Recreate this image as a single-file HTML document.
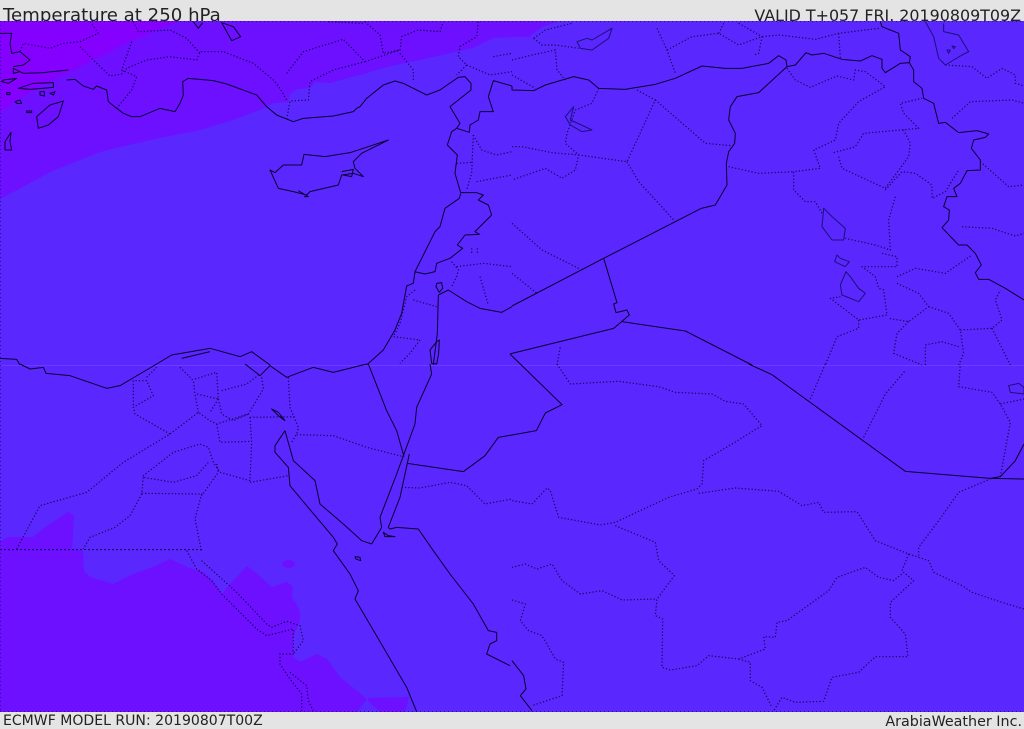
<!DOCTYPE html>
<html><head><meta charset="utf-8"><title>Temperature at 250 hPa</title>
<style>html,body{margin:0;padding:0;background:#e4e4e4;width:1024px;height:729px;overflow:hidden}svg{display:block}text{font-family:"DejaVu Sans","Liberation Sans",sans-serif;fill:#222}
.b{fill:none;stroke:#0a0030;stroke-width:3;stroke-linejoin:round}
.d{fill:none;stroke:#12064a;stroke-width:3.6;stroke-dasharray:3.6 6.4;stroke-linejoin:round}
.l{fill:none;stroke:#1c1078;stroke-width:3;stroke-linejoin:round}</style></head><body>
<svg width="1024" height="729" viewBox="0 0 1024 729" xmlns="http://www.w3.org/2000/svg">
<rect width="1024" height="729" fill="#e4e4e4"/>
<text x="3" y="21" font-size="18.15">Temperature at 250 hPa</text>
<text x="1021" y="21" font-size="15.9" text-anchor="end">VALID T+057 FRI. 20190809T09Z</text>
<text x="3" y="725" font-size="14.05">ECMWF MODEL RUN: 20190807T00Z</text>
<text x="1022" y="726" font-size="14.3" text-anchor="end">ArabiaWeather Inc.</text>
<rect y="21" width="1024" height="691" fill="#5a27ff"/>
<path fill="#6c10ff" d="M0 21V199L17 190 50 172 100 152 150 140 200 130 233 120 267 107 273 103 288 102 291 93 297 89 310 88 315 82 330 83 367 73 383 68 433 57 473 48 493 38 512 37 529 37 542 27 559 21Z"/>
<path fill="#8400ff" d="M0 21V112L33 90 93 60 133 40 180 21Z"/>
<path fill="#6c10ff" d="M0 712V542L8 537 33 537 47 526 68 512 74 516 72 549 83 551 84 571 90 577 113 584 133 574 153 567 170 559 187 567 203 572 213 581 222 594 230 584 247 566 257 574 272 587 287 582 293 587 292 597 300 611 300 621 293 637 293 657 300 662 317 654 327 659 340 677 367 699 357 712Z"/>
<path fill="#6c10ff" d="M368 698 409 697 405 712H380L368 701Z"/>
<ellipse cx="288.500" cy="564" rx="6" ry="4" fill="#6c10ff"/>
<rect y="365" width="1024" height="1" fill="#6a3cff"/>
<path d="M0 21.500H1024M0 711.500H1024M.5 21V712" fill="none" stroke="#2a1090" stroke-width="1" stroke-dasharray="1 3"/>
<g transform="scale(.33333)">
<path class="d" d="M270 65 295 100 240 125 190 130 150 145 70 130 60 155M240 140 280 180 330 228 365 222 380 205 440 180 510 170 590 180 600 155 670 155 760 190 820 240 840 265 860 300M400 65 415 95 510 90 560 115 600 160M395 125 365 210 410 230 395 270 350 325M860 220 910 155 1030 118 1095 185 1000 210 930 245 925 300 870 303 860 360M1095 185 1200 150 1205 110 1255 90 1320 95 1330 65M1095 65 1140 105 1150 160 1200 150M985 65 1090 70M1200 160 1240 210 1240 245M1435 65 1430 110 1380 140 1375 170 1400 195 1370 225M1400 195 1470 225 1536 215M1480 170 1536 160M1420 405 1415 520 1400 570M1420 405 1445 450 1490 465 1536 455M1370 490 1420 487M1430 545 1536 525M1355 785 1375 810 1370 830 1355 860M1370 800 1450 790 1536 800M1440 830 1465 915M1245 870 1220 890 1200 970 1180 1010 1260 1020 1230 1060 1200 1090M1240 900 1310 920M1415 745V760M1432 745V760"/>
<path class="b" d="M200 240 225 238 250 258 280 268 290 258 320 270 325 305 350 325 370 340 395 350 420 350 480 325 525 335 540 310 550 285 548 245 565 235 640 242 680 252 770 285 800 320 830 345 880 365 910 355 1000 348 1060 335 1070 325 1080 320 1100 295 1150 255 1185 243 1210 250 1280 285 1320 270 1375 232 1395 230 1413 250 1413 270 1350 320 1380 370 1370 385 1408 397 1410 375 1435 360 1440 335 1480 335 1465 290 1480 242 1536 258"/>
<path class="b" d="M1370 385 1355 395 1342 435 1372 465 1365 520 1382 578 1430 578 1450 585 1435 600 1465 615 1475 645 1425 695 1438 703 1395 705 1372 735 1388 745 1350 775 1310 790 1305 815 1275 822 1243 815M1382 580 1378 595 1335 625 1320 680 1305 695 1245 815 1240 850 1220 858 1205 940 1185 990 1150 1050 1100 1095"/>
<path class="b" d="M1315 885 1345 870 1400 905 1440 925 1505 937 1536 920M1315 885 1312 1000 1300 1095"/>
<path class="b" d="M1310 1025 1318 1020 1316 1060 1310 1092 1295 1090 1290 1050ZM1310 850 1325 848 1328 865 1318 877 1308 860Z"/>
<path class="b" d="M1165 420 1085 460 1060 485 1065 505 1090 530 1060 520 1025 525 1015 555 930 575 920 585 880 575 835 565 810 510 825 518 850 495 905 495 912 463 975 470 1050 458ZM1025 515 1060 508 1055 530 1030 525M895 572 925 590 912 590"/>
<path class="b" d="M190 303 150 315 110 350 115 385 145 375 175 350ZM33 397 15 425 15 450 35 450 30 425ZM205 210 130 218 70 220 40 205 40 220 60 215M55 265 100 250 160 248 160 262 90 268ZM10 240 50 235 25 250 5 245ZM120 275 133 275 133 288 120 285ZM150 280 165 275 160 285ZM80 333 95 333 95 338 80 338ZM20 278 30 278 30 284 20 284ZM45 305 60 300 65 310 50 310ZM0 100 35 100 30 130 35 160 60 155 90 180 70 195 40 200"/>
<path class="b" d="M665 68 700 80 722 110 695 122 680 95ZM580 65 595 85 608 68M0 1075 50 1078 60 1095M465 1095 515 1065 630 1045 720 1070 755 1055 810 1095M545 1075 630 1055"/>
</g>
<g transform="translate(512 0) scale(.33333)">
<path class="d" d="M0 180 60 165 130 150 135 210 160 240M65 115 100 90 180 70M65 115 90 135 130 135 200 145M465 150 540 110 620 100 680 135 750 110 800 105 910 118 980 100 1100 85M435 85 465 150 490 220M620 100 635 70M680 70 750 110 740 160 725 165M980 100 985 175M825 205 850 240 895 262 975 228 1025 240 1030 210 1060 215 1120 260 1040 305 980 370 970 420 905 450 925 505 845 515 845 570 880 605 910 605 930 640M650 500 740 520 845 515M260 265 240 310 190 330 165 400 160 430 200 465 345 485 430 300 375 270M430 300 580 430 660 437M345 485 380 545 490 665M0 440 30 440 120 458 200 465 190 510 150 535 100 505 0 540M0 225 70 265M0 670 90 750 200 805M0 820 75 880M965 458 1030 440 1055 400 1220 385 1175 340 1165 310 1230 295M980 470 990 505 1120 565 1190 470 1195 430 1175 390M1120 570 1170 515 1210 520 1260 555 1260 595 1300 575 1340 510M1405 485 1490 560 1536 555M1320 355 1375 305 1500 300 1536 310M1300 195 1380 200 1425 235 1470 205 1510 225 1510 250 1536 258M1150 590 1130 660 1135 750 1090 735 1000 715M1110 760 1155 770 1155 800 1050 800 1090 830 1100 865 1115 870 1125 945 1040 960 955 895 985 890M1040 960 1040 985 975 1010 940 1095M1155 830 1210 805 1300 820 1380 765M1155 850 1220 880 1250 920 1190 965 1130 955M1250 920 1310 940 1345 990 1355 1060 1340 1095M1190 965 1155 1000 1145 1060 1230 1095M1345 990 1440 985 1470 960 1450 900 1465 870M1240 1095 1240 1035 1290 1025 1340 1040M1440 985 1495 1095M1350 680 1440 685 1510 708 1536 700M135 1095 145 1040"/>
<path class="b" d="M0 258V270L65 272 100 255 185 230 230 240 260 265 340 268 430 253 490 235 570 198 640 205 690 205 770 190 800 167 822 180 825 200 850 195 882 158 900 165 935 160 990 178 1045 183 1080 167 1110 178 1110 205 1120 218 1165 190 1192 188 1205 210 1205 245 1230 265 1235 295 1265 310 1280 370 1300 367 1340 398 1395 392 1430 402 1420 412 1385 420 1378 445 1405 480 1405 510 1365 512 1345 550 1325 565 1335 590 1305 590 1295 620 1312 630 1310 660 1290 683 1340 735 1365 735 1390 760 1408 795 1390 818 1400 838 1430 838 1480 865 1536 900M1105 65 1110 80 1160 100 1165 150 1195 170 1192 188"/>
<path class="b" d="M825 200 740 278 675 290 655 320 650 360 670 400 668 430 650 455 643 490 645 555 610 615 568 625 275 775 0 918M275 775 315 908 305 912 312 938 345 930 352 945 305 985 0 1060-6 1062M330 965 520 993 720 1095"/>
<path class="l" d="M195 125 225 115 240 120 300 85 290 115 240 150 205 145ZM185 320 160 350 175 375 210 395 240 390 215 378 175 360ZM1240 65 1265 110 1280 175 1300 195 1350 165 1370 155 1340 105 1295 95 1295 70M1305 150 1315 150 1310 160ZM1320 138 1330 140 1325 146ZM935 625 930 680 960 720 995 720 1000 685 960 650ZM975 765 968 785 1000 800 1012 785 985 775ZM1002 815 985 855 990 885 1040 905 1060 880 1040 865 1015 830Z"/>
</g>
<g transform="translate(0 364) scale(.33333)">
<path class="d" d="M50 555 120 425 260 385 370 295 510 210 595 145 630 170 650 180 745 150 790 75 785 40M510 210 405 150 400 130 460 95 440 50 400 50 400 130M440 40 470 10M540 10 580 50 585 90 595 145M585 45 650 25 655 105 590 90M655 105 630 145M655 105 665 150 700 170 745 150M665 80 740 60 780 30M650 180 660 235 755 232M750 160 890 158M750 160 755 232 750 350 660 325 640 295 625 250 600 240 520 265 430 335 430 340 520 355 590 335 625 295M430 340 425 390 390 455 345 490 270 520 250 555M425 388 605 390 585 465 605 565M650 300 655 325 605 395M750 355 865 335M865 40 870 130 895 190 890 210 875 235M890 212 1000 215 1100 250 1210 278M1205 370 1260 372 1350 355 1400 365 1455 420 1536 405M560 560 590 615 635 650 665 690 770 795 800 815 880 795 880 870 840 870 840 900 870 945 905 990 905 1040M605 590 710 685 800 780 815 790 860 772 900 785 910 830 880 870M870 925 920 965 925 1010 940 1040"/>
<path d="M0 557H610" fill="none" stroke="#12064a" stroke-width="3" stroke-dasharray="6 6"/>
<path class="b" d="M60 0 90 15 130 10 138 28 210 35 320 73 360 65 470 0M735 0 780 35 810 5 860 40 940 10 1000 25 1100 0M1105 0 1160 140 1190 200 1212 278M1290 0 1295 30 1250 130 1245 180 1210 275 1190 330 1140 460 1145 490 1115 540M1228 270 1215 330 1200 400 1165 490 1170 495 1190 490 1255 495 1300 560 1350 630 1420 720 1465 800 1490 805 1490 830 1470 840 1460 870 1530 905M1222 298 1390 323 1455 275 1495 220 1536 213M855 200 825 245 825 265 865 310 870 365 920 425 1000 520 1012 540 1000 560 1050 630 1075 680 1065 705 1150 850 1220 970 1250 1043M855 200 880 290 945 350 960 420 1030 480 1085 530 1115 540M815 135 835 145 855 170 835 155ZM1065 578 1080 580 1082 590 1068 585ZM1150 505 1165 515 1185 518 1155 518Z"/>
</g>
<g transform="translate(512 364) scale(.33333)">
<path class="d" d="M135 0 175 60 320 52 440 68 490 85 600 90 640 112 695 120 750 185 660 240 575 290 570 360 555 375 470 400 310 475 265 483 140 460 115 380 105 372 60 420 0 410M560 388 670 372 800 382 870 425 920 415 935 445 1035 443 1090 530 1190 570 1250 590 1265 625 1350 665 1380 685 1470 715 1536 735M310 485 430 535 440 590 487 635 435 705 430 755 452 765 450 910 475 918 555 905 590 875 680 885 760 855 755 818 790 820 795 775 825 770 950 680 975 640 1060 610 1100 640 1145 650 1175 625 1205 650 1135 715 1135 760 1180 810 1188 878 1090 878 1040 925 960 940 935 1012 850 1015 810 1000 785 1040M680 885 715 895 715 950 750 970 780 1030M0 610 40 600 75 615 120 600 150 650 205 690 270 680 330 708 435 705M0 708 40 720 25 770 50 800 90 815 130 885 155 895 150 995 60 1025M1190 570 1170 620M1220 575 1220 550 1280 470 1340 385 1435 345M1465 338 1495 175 1465 120 1440 85 1340 68 1345 0M1465 120 1536 105M895 105 940 0M1055 220 1120 90 1180 20"/>
<path class="b" d="M-6 -30 150 122 100 147 73 200 0 213M710 0 780 32 1180 322 1435 343 1536 345M1435 343 1465 338 1510 290 1536 240M0 890 35 935 42 975 25 995 60 1040"/>
<path class="l" d="M1490 65 1520 58 1536 70V90L1495 85Z"/>
</g>
</svg>
</body></html>
